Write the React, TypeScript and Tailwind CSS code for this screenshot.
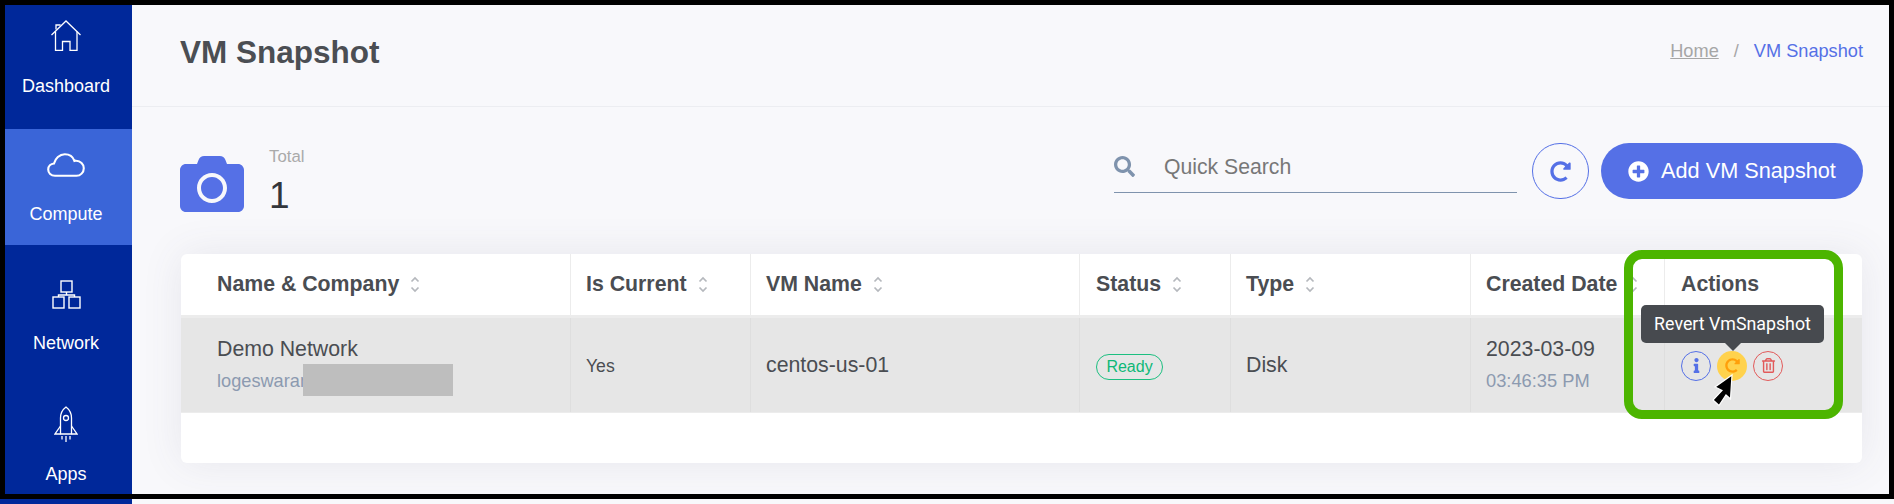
import React from "react";
import { FaCamera, FaInfo, FaPlusCircle, FaRedoAlt, FaRegTrashAlt, FaSearch } from "react-icons/fa";

const sans = "font-['Liberation_Sans',Arial,sans-serif]";

function HomeIcon() {
  return (
    <svg width="30" height="31" viewBox="0 0 30 31" fill="none" stroke="white" strokeWidth="1.3">
      <path d="M.5 15 15 1l14.500 14" />
      <path d="M5 9.500V5h4v.5" />
      <path d="M4.500 11.500V30.300h7V21.500h7.500v8.800h7V11.500" />
    </svg>
  );
}
function CloudIcon() {
  return (
    <svg width="38" height="24" viewBox="0 0 38 24" fill="none" stroke="white" strokeWidth="2.1">
      <path d="M8 22.800C4 22.800 1.200 20 1.200 16.500c0-3.300 2.600-5.800 5.800-6C8.200 5.500 12.500 1.200 17.800 1.200c4.500 0 8.200 2.600 9.600 6.700.7-.2 1.300-.3 1.900-.2 4 .3 7.500 3.500 7.500 7.500 0 4.300-3.400 7.600-7.300 7.600z" />
    </svg>
  );
}
function NetIcon() {
  return (
    <svg width="29" height="29" viewBox="0 0 29 29" fill="none" stroke="white" strokeWidth="1.4">
      <rect x="9" y="1" width="11" height="11" />
      <rect x="1" y="17" width="11" height="11" />
      <rect x="17" y="17" width="11" height="11" />
      <path d="M14.500 12v3M6.500 17v-2h16v2" />
    </svg>
  );
}
function RocketIcon() {
  return (
    <svg width="24" height="37" viewBox="0 0 24 37" fill="none" stroke="white" strokeWidth="1.3">
      <path d="M12 1c-4 3-5.500 7-5.500 11v16h11V12c0-4-1.500-8-5.500-11z" />
      <circle cx="12" cy="12" r="2.500" />
      <path d="M6.500 20 1 28h5.500M17.500 20l5.500 8h-5.500M12 30v6M8 30v3.500M16 30v3.500" />
    </svg>
  );
}

function SortIcon() {
  return (
    <svg width="10" height="17" viewBox="0 0 10 17" fill="none" stroke="#b5b8bd" strokeWidth="1.7" className="shrink-0">
      <path d="M1.500 5.500 5 2l3.500 3.500M1.500 11.500 5 15l3.500-3.500" />
    </svg>
  );
}

const navItems = [
  { label: "Dashboard", icon: <HomeIcon />, active: false, pad: "pt-[19px]", gap: "mt-[25px]" },
  { label: "Compute", icon: <CloudIcon />, active: true, pad: "pt-[24px]", gap: "mt-[27px]" },
  { label: "Network", icon: <NetIcon />, active: false, pad: "pt-[23px]", gap: "mt-[24px]" },
  { label: "Apps", icon: <RocketIcon />, active: false, pad: "pt-[21px]", gap: "mt-[21px]" },
];

const cols = "grid grid-cols-[390px_180px_329px_151px_240px_194px_197px]";

function Head({ label, sort = true, pl = "pl-[15px]" }: { label: string; sort?: boolean; pl?: string }) {
  return (
    <div className={`flex items-center gap-[11px] border-r border-[#ececec] last:border-r-0 text-[21.3px] font-bold text-[#4a4d52] whitespace-nowrap ${pl}`}>
      <span>{label}</span>
      {sort && <SortIcon />}
    </div>
  );
}

function Cell({ children, pl = "pl-[15px]", extra = "" }: { children: React.ReactNode; pl?: string; extra?: string }) {
  return <div className={`flex flex-col justify-center border-r border-[#dedede] ${pl} ${extra}`}>{children}</div>;
}

export default function App() {
  return (
    <div className={`relative flex h-[504px] w-[1894px] overflow-hidden bg-[#f8f8fb] ${sans}`}>
      <aside className="w-[132px] shrink-0 bg-[#00289a] pt-px flex flex-col gap-3">
        {navItems.map((n) => (
          <div
            key={n.label}
            className={`flex h-[116px] shrink-0 flex-col items-center text-[18px] leading-[20px] text-white ${n.pad} ${n.active ? "bg-[#3a65d8]" : ""}`}
          >
            {n.icon}
            <span className={n.gap}>{n.label}</span>
          </div>
        ))}
      </aside>

      <main className="min-w-0 flex-1">
        <header className="flex h-[107px] items-center justify-between border-b border-[#ecedf1] pl-[48px] pr-[31px]">
          <h1 className="text-[31.5px] font-bold leading-none text-[#4b4e53]">VM Snapshot</h1>
          <nav className="flex items-center text-[18.2px] pb-[2px]">
            <span className="text-[#a6a6a6] underline">Home</span>
            <span className="mx-[15px] text-[#a6a6a6]">/</span>
            <span className="text-[#5570e6]">VM Snapshot</span>
          </nav>
        </header>

        <section className="flex h-[147px] items-start justify-between pl-[48px] pr-[31px] pt-[36px]">
          <div className="flex">
            <FaCamera className="mt-[9px] text-[#5570e6]" size={64} />
            <div className="ml-[25px]">
              <div className="text-[16.8px] leading-[20px] text-[#aaaaaa] mt-[4px]">Total</div>
              <div className="mt-[7px] text-[37px] leading-[44px] font-light text-[#33363b]">1</div>
            </div>
          </div>

          <div className="flex items-start">
            <div className="relative flex h-[50px] w-[403px] items-center border-b border-[#7f93ad] pb-[2px]">
              <FaSearch className="text-[#7f93ad]" size={21} />
              <span className="ml-[29px] text-[21.2px] text-[#777]">Quick Search</span>
            </div>
            <div className="ml-[15px] flex h-[56px] w-[57px] items-center justify-center rounded-full border border-[#5570e6]">
              <FaRedoAlt className="text-[#5570e6]" size={21} />
            </div>
            <div className="ml-[12px] flex h-[56px] w-[262px] items-center justify-center gap-[12px] rounded-full bg-[#5570e6] text-[21.7px] text-white">
              <FaPlusCircle size={21} />
              <span>Add VM Snapshot</span>
            </div>
          </div>
        </section>

        <div className="ml-[49px] h-[209px] w-[1681px] overflow-hidden rounded-[6px] bg-white shadow-[0_0_40px_rgba(80,80,110,0.1)]">
          <div className={`${cols} h-[64px] border-b-[3px] border-[#ececec]`}>
            <Head label="Name & Company" pl="pl-[36px]" />
            <Head label="Is Current" />
            <Head label="VM Name" />
            <Head label="Status" pl="pl-[16px]" />
            <Head label="Type" />
            <Head label="Created Date" />
            <Head label="Actions" sort={false} pl="pl-[16px]" />
          </div>
          <div className={`${cols} h-[95px] border-b border-[#ececec] bg-[#e6e6e6] text-[21.3px] text-[#4a4d52]`}>
            <Cell pl="pl-[36px]" extra="pb-[2px]">
              <span className="mb-[4px] leading-[30px]">Demo Network</span>
              <span className="relative text-[18.2px] leading-[26px] text-[#8c9ab0]">
                logeswaran
                <span className="absolute left-[86px] top-[-4px] h-[32px] w-[150px] bg-[#bebebe]" />
              </span>
            </Cell>
            <Cell extra="pt-[2px]">
              <span className="text-[17.6px]">Yes</span>
            </Cell>
            <Cell extra="pt-[1px]">
              <span>centos-us-01</span>
            </Cell>
            <Cell pl="pl-[16px]" extra="pt-[4px]">
              <span className="flex h-[26px] w-[67px] items-center justify-center rounded-full border border-[#1cbf80] text-[16px] text-[#0fb877]">
                Ready
              </span>
            </Cell>
            <Cell extra="pt-[1px]">
              <span>Disk</span>
            </Cell>
            <Cell extra="pb-[2px]">
              <span className="mb-[4px] leading-[30px]">2023-03-09</span>
              <span className="text-[18.3px] leading-[26px] text-[#8c9ab0]">03:46:35 PM</span>
            </Cell>
            <div className="relative flex items-center gap-[6px] pl-[16px] pt-[1px]">
              <div className="absolute left-[-24px] top-[-13px] flex h-[38px] w-[183px] items-center justify-center rounded-[5px] bg-[#474a4f] font-['Roboto',sans-serif] text-[17.8px] text-white">
                Revert VmSnapshot
                <span className="absolute left-[83px] top-[37px] h-0 w-0 border-x-[9px] border-t-[9px] border-x-transparent border-t-[#474a4f]" />
              </div>
              <div className="flex h-[30px] w-[30px] items-center justify-center rounded-full border border-[#5570e6] text-[#5570e6]">
                <FaInfo size={15} />
              </div>
              <div className="flex h-[30px] w-[30px] items-center justify-center rounded-full bg-[#ffd24d] text-[#ff9f0a]">
                <FaRedoAlt size={15} />
              </div>
              <div className="flex h-[30px] w-[30px] items-center justify-center rounded-full border border-[#e25a5a] text-[#e25a5a]">
                <FaRegTrashAlt size={15} />
              </div>
              <svg width="30" height="36" viewBox="0 0 30 36" className="absolute left-[45px] top-[54px]">
                <path d="M22 3 5 15l7 3.500L3 28l6 5.500 7-10.500 4.500 4z" fill="black" stroke="white" strokeWidth="1.2" />
              </svg>
            </div>
          </div>
        </div>
      </main>

      <div className="pointer-events-none absolute left-0 top-0 h-[499px] w-[1894px] border-[5px] border-black" />
      <div className="pointer-events-none absolute left-[1624px] top-[250px] h-[169px] w-[219px] rounded-[18px] border-[9px] border-[#4cb500]" />
    </div>
  );
}
